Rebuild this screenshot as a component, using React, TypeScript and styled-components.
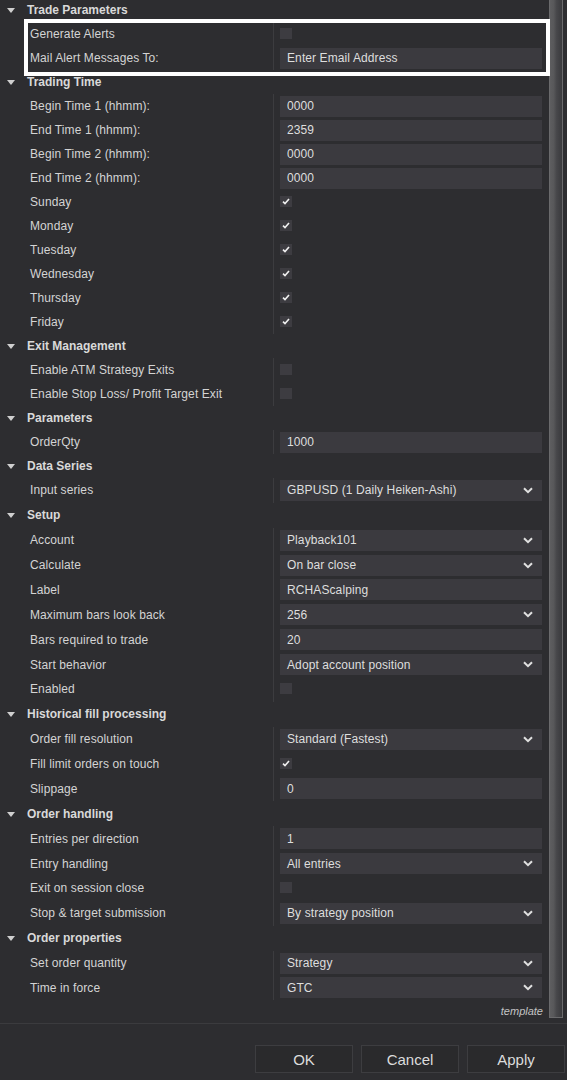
import React from "react";
import styled, { createGlobalStyle } from "styled-components";

const Global = createGlobalStyle`
  html, body { margin: 0; padding: 0; background: #2d2d30; }
  body { font-family: "Liberation Sans", Arial, sans-serif; font-size: 12px; color: #d6d6d6; }
  * { box-sizing: border-box; }
`;

const Page = styled.div`
  width: 567px;
  height: 1080px;
  display: flex;
  flex-direction: column;
  background: #2d2d30;
  position: relative;
  overflow: hidden;
`;

const Main = styled.div`
  height: 1024px;
  display: flex;
  border-bottom: 1px solid #3b3b3e;
`;

const List = styled.div`
  width: 549px;
  margin-top: -2px;
  display: flex;
  flex-direction: column;
`;

const ScrollTrack = styled.div`
  width: 18px;
  display: flex;
  padding-right: 4px;
`;

const Thumb = styled.div`
  width: 14px;
  height: 1018px;
  border: 1px solid #6a6a6c;
  border-top: none;
  background: linear-gradient(to right, #5e5e60 0%, #58585a 30%, #47474a 55%, #3a3a3d 100%);
`;

const HeaderRow = styled.div<{ $h: number }>`
  height: ${(p) => p.$h}px;
  display: flex;
  align-items: center;
  padding-left: 7px;
  font-weight: bold;
  color: #d9d9d9;
`;

const Caret = styled.span`
  width: 0;
  height: 0;
  border-left: 4px solid transparent;
  border-right: 4px solid transparent;
  border-top: 5px solid #cfcfcf;
  margin-right: 12px;
  margin-top: 1px;
`;

const Row = styled.div<{ $h: number }>`
  height: ${(p) => p.$h}px;
  display: grid;
  grid-template-columns: 273px 1fr;
  align-items: stretch;
`;

const Name = styled.div`
  display: flex;
  align-items: center;
  padding-left: 30px;
  color: #d4d4d4;
  white-space: nowrap;
  letter-spacing: 0.1px;
`;

const Value = styled.div`
  border-left: 1px solid #3c3c3f;
  display: flex;
  align-items: center;
  padding: 0 7px 0 6px;
`;

const Field = styled.div`
  flex: 1;
  height: 21px;
  background: #3b3a3f;
  display: flex;
  align-items: center;
  padding: 0 9px 0 7px;
  color: #dedede;
  font-size: 12px;
  letter-spacing: 0.1px;
`;

const FieldText = styled.span`
  flex: 1;
`;

const Box = styled.div`
  width: 12px;
  height: 11px;
  background: #3d3c41;
  display: flex;
  align-items: center;
  justify-content: center;
  margin-top: -1px;
`;

const TemplateRow = styled.div`
  height: 22px;
  display: flex;
  align-items: center;
  justify-content: flex-end;
  padding-right: 6px;
  font-style: italic;
  font-size: 11px;
  color: #c4c4c4;
`;

const Footer = styled.div`
  flex: 1;
  display: flex;
  justify-content: flex-end;
  align-items: flex-start;
  gap: 8px;
  padding: 21px 2px 0 0;
`;

const Button = styled.button`
  width: 98px;
  height: 28px;
  background: #2a2a2c;
  border: 1px solid #3d3d40;
  color: #dcdcdc;
  font-family: "Liberation Sans", Arial, sans-serif;
  font-size: 15px;
  padding: 0;
`;

const Highlight = styled.div`
  position: absolute;
  left: 24px;
  top: 19px;
  width: 526px;
  height: 57px;
  border: 4px solid #ffffff;
  pointer-events: none;
`;

type Item =
  | { label: string; kind: "check"; checked: boolean }
  | { label: string; kind: "input"; value: string }
  | { label: string; kind: "select"; value: string };

type Section = { title: string; h: number; headH: number; items: Item[] };

const chk = (label: string, checked: boolean): Item => ({ label, kind: "check", checked });
const inp = (label: string, value: string): Item => ({ label, kind: "input", value });
const sel = (label: string, value: string): Item => ({ label, kind: "select", value });

const R = 24.875;

const sections: Section[] = [
  { title: "Trade Parameters", h: 24, headH: 24, items: [chk("Generate Alerts", false), inp("Mail Alert Messages To:", "Enter Email Address")] },
  {
    title: "Trading Time",
    h: 24,
    headH: 24,
    items: [
      inp("Begin Time 1 (hhmm):", "0000"),
      inp("End Time 1 (hhmm):", "2359"),
      inp("Begin Time 2 (hhmm):", "0000"),
      inp("End Time 2 (hhmm):", "0000"),
      chk("Sunday", true),
      chk("Monday", true),
      chk("Tuesday", true),
      chk("Wednesday", true),
      chk("Thursday", true),
      chk("Friday", true),
    ],
  },
  { title: "Exit Management", h: 24, headH: 24, items: [chk("Enable ATM Strategy Exits", false), chk("Enable Stop Loss/ Profit Target Exit", false)] },
  { title: "Parameters", h: 24, headH: 24, items: [inp("OrderQty", "1000")] },
  { title: "Data Series", h: R, headH: 24, items: [sel("Input series", "GBPUSD (1 Daily Heiken-Ashi)")] },
  {
    title: "Setup",
    h: R,
    headH: R,
    items: [
      sel("Account", "Playback101"),
      sel("Calculate", "On bar close"),
      inp("Label", "RCHAScalping"),
      sel("Maximum bars look back", "256"),
      inp("Bars required to trade", "20"),
      sel("Start behavior", "Adopt account position"),
      chk("Enabled", false),
    ],
  },
  {
    title: "Historical fill processing",
    h: R,
    headH: R,
    items: [sel("Order fill resolution", "Standard (Fastest)"), chk("Fill limit orders on touch", true), inp("Slippage", "0")],
  },
  {
    title: "Order handling",
    h: R,
    headH: R,
    items: [
      inp("Entries per direction", "1"),
      sel("Entry handling", "All entries"),
      chk("Exit on session close", false),
      sel("Stop & target submission", "By strategy position"),
    ],
  },
  { title: "Order properties", h: R, headH: R, items: [sel("Set order quantity", "Strategy"), sel("Time in force", "GTC")] },
];

const Check = () => (
  <svg width="8" height="7" viewBox="0 0 8 7">
    <path d="M1 3.6 L3 5.6 L7 1" fill="none" stroke="#f0f0f0" strokeWidth="1.6" />
  </svg>
);

const Chevron = () => (
  <svg width="10" height="7" viewBox="0 0 10 7">
    <path d="M1 1.2 L5 5.2 L9 1.2" fill="none" stroke="#e0e0e0" strokeWidth="2" />
  </svg>
);

const renderValue = (it: Item) => {
  if (it.kind === "check") return <Box>{it.checked && <Check />}</Box>;
  return (
    <Field>
      <FieldText>{it.value}</FieldText>
      {it.kind === "select" && <Chevron />}
    </Field>
  );
};

export default function App() {
  return (
    <Page>
      <Global />
      <Main>
        <List>
          {sections.map((s) => (
            <React.Fragment key={s.title}>
              <HeaderRow $h={s.headH}>
                <Caret />
                {s.title}
              </HeaderRow>
              {s.items.map((it) => (
                <Row key={it.label} $h={s.h}>
                  <Name>{it.label}</Name>
                  <Value>{renderValue(it)}</Value>
                </Row>
              ))}
            </React.Fragment>
          ))}
          <TemplateRow>template</TemplateRow>
        </List>
        <ScrollTrack>
          <Thumb />
        </ScrollTrack>
      </Main>
      <Footer>
        <Button>OK</Button>
        <Button>Cancel</Button>
        <Button>Apply</Button>
      </Footer>
      <Highlight />
    </Page>
  );
}
